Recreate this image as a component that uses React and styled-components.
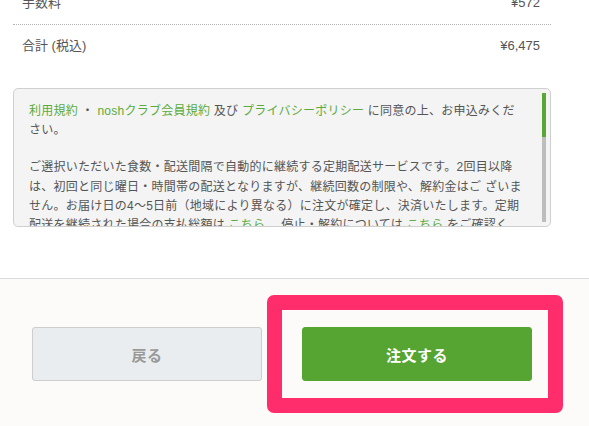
import React from 'react';
import styled, {createGlobalStyle} from 'styled-components';

const Global=createGlobalStyle`
    html,body{
        margin:0;
        padding:0;
        background:#fff;
        font-family:"Liberation Sans","Noto Sans CJK JP",sans-serif;
        color:#555;
    }
`;

const Page=styled.div`
    overflow:hidden;
    height:426px;
    display:flex;
    flex-direction:column;
`;
const Main=styled.section`
    margin:-18px 38px 0 13px;
    display:flex;
    flex-direction:column;
`;
const Row=styled.div`
    display:flex;
    justify-content:space-between;
    padding:11px 11px 11px 9px;
    font-size:13px;
    line-height:20px;
    border-bottom:${({last})=>last?'none':'1px dotted #b5b5b5'};
`;
const Terms=styled.div`
    position:relative;
    margin-top:21px;
    height:139px;
    box-sizing:border-box;
    border:1px solid #cfcfcf;
    border-radius:5px;
    background:#f4f4f4;
`;
const TermsBody=styled.div`
    height:100%;
    overflow:hidden;
    box-sizing:border-box;
    padding:13px 12px 0 15px;
    font-size:12px;
    line-height:19.2px;
    letter-spacing:.25px;
    white-space:nowrap;
    color:#555;
`;
const ScrollTrack=styled.div`
    position:absolute;
    top:4px;
    bottom:4px;
    right:4px;
    width:4px;
    background:#bdbdbd;
`;
const ScrollThumb=styled.div`
    height:44px;
    background:#58a934;
`;
const Para=styled.p`
    margin:0 0 18px;
`;
const Link=styled.a`
    color:#5aab3c;
    text-decoration:none;
`;
const Footer=styled.footer`
    margin-top:51px;
    flex:1;
    border-top:1px solid #dcdcdc;
    background:#fcfbfa;
    padding-top:48px;
`;
const Buttons=styled.div`
    width:538px;
    margin-left:13px;
    display:flex;
    justify-content:center;
    gap:40px;
`;
const Button=styled.button`
    width:230px;
    height:54px;
    box-sizing:border-box;
    border-radius:3px;
    font-family:"Liberation Sans","Noto Sans CJK JP",sans-serif;
    font-size:15px;
    font-weight:700;
    letter-spacing:.5px;
    cursor:pointer;
    border:1px solid ${({primary})=>primary?'#56a532':'#cdcdcd'};
    background:${({primary})=>primary?'#56a532':'#e9edef'};
    color:${({primary})=>primary?'#fff':'#999'};
`;
const Highlight=styled.div`
    position:relative;
`;
const Marker=styled.span`
    position:absolute;
    top:-32px;
    bottom:-32px;
    left:-35px;
    right:-31px;
    border:15px solid #ff2d6b;
    border-radius:7px;
    pointer-events:none;
`;

export default function App(){
    return (
<Page>
<Global/>
<Main>
    <Row><span>手数料</span><span>¥572</span></Row>
    <Row last><span>合計 (税込)</span><span>¥6,475</span></Row>
    <Terms>
        <TermsBody>
            <Para>
                <Link href="#">利用規約</Link> ・ <Link href="#">noshクラブ会員規約</Link> 及び <Link href="#">プライバシーポリシー</Link> に同意の上、お申込みくだ<br/>
                さい。
            </Para>
            <Para>
                ご選択いただいた食数・配送間隔で自動的に継続する定期配送サービスです。2回目以降<br/>
                は、初回と同じ曜日・時間帯の配送となりますが、継続回数の制限や、解約金はご ざいま<br/>
                せん。お届け日の4〜5日前（地域により異なる）に注文が確定し、決済いたします。定期<br/>
                配送を継続された場合の支払総額は <Link href="#">こちら</Link> 、停止・解約については <Link href="#">こちら</Link> をご確認く<br/>
                ださい。
            </Para>
            <Para>
                メニューの変更・スキップ・お届け日の変更は、注文確定前であればマイページから<br/>
                いつでも行えます。
            </Para>
        </TermsBody>
        <ScrollTrack><ScrollThumb/></ScrollTrack>
    </Terms>
</Main>
<Footer>
    <Buttons>
        <Button type="button">戻る</Button>
        <Highlight>
            <Button type="button" primary>注文する</Button>
            <Marker/>
        </Highlight>
    </Buttons>
</Footer>
</Page>
    );
}
